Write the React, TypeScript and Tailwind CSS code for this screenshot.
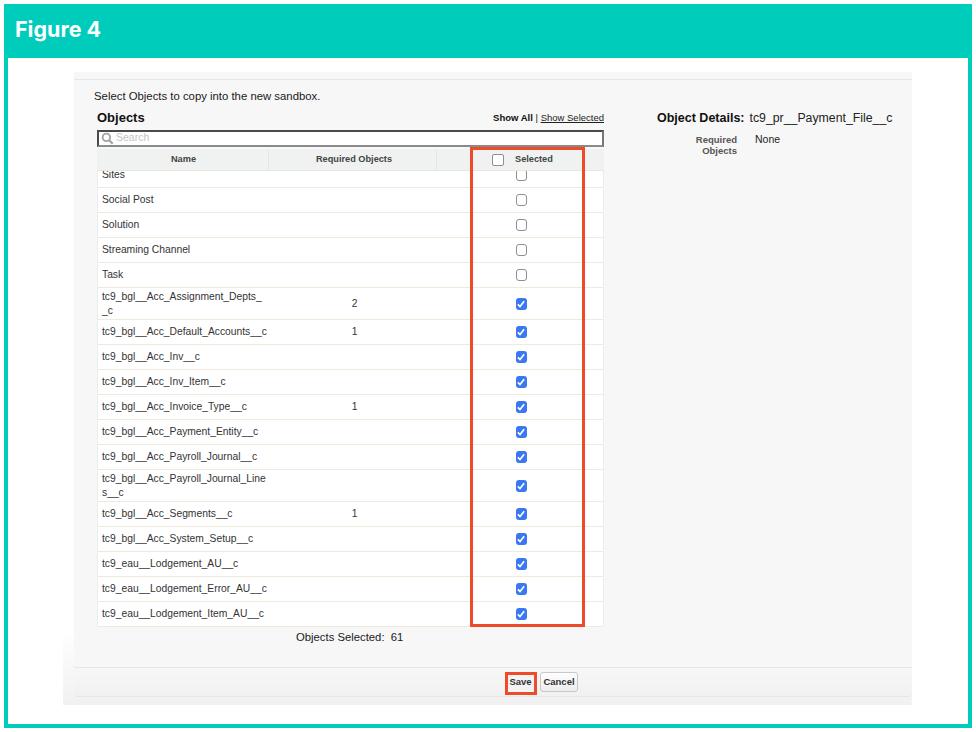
import React from "react";

type Row = { name: React.ReactNode; req?: string; on?: boolean; tall?: boolean };

const rows: Row[] = [
  { name: "Sites" },
  { name: "Social Post" },
  { name: "Solution" },
  { name: "Streaming Channel" },
  { name: "Task" },
  { name: <>tc9_bgl__Acc_Assignment_Depts_<br />_c</>, req: "2", on: true, tall: true },
  { name: "tc9_bgl__Acc_Default_Accounts__c", req: "1", on: true },
  { name: "tc9_bgl__Acc_Inv__c", on: true },
  { name: "tc9_bgl__Acc_Inv_Item__c", on: true },
  { name: "tc9_bgl__Acc_Invoice_Type__c", req: "1", on: true },
  { name: "tc9_bgl__Acc_Payment_Entity__c", on: true },
  { name: "tc9_bgl__Acc_Payroll_Journal__c", on: true },
  { name: <>tc9_bgl__Acc_Payroll_Journal_Line<br />s__c</>, on: true, tall: true },
  { name: "tc9_bgl__Acc_Segments__c", req: "1", on: true },
  { name: "tc9_bgl__Acc_System_Setup__c", on: true },
  { name: "tc9_eau__Lodgement_AU__c", on: true },
  { name: "tc9_eau__Lodgement_Error_AU__c", on: true },
  { name: "tc9_eau__Lodgement_Item_AU__c", on: true },
];

function Check({ on }: { on?: boolean }) {
  if (on) {
    return (
      <div className="flex h-[12px] w-[11px] items-center justify-center rounded-[3px] bg-[#3a78f2]">
        <svg viewBox="0 0 12 12" className="h-[10px] w-[10px]">
          <path d="M2.2 6.4 L4.8 9 L9.8 2.8" fill="none" stroke="#fff" strokeWidth="2" />
        </svg>
      </div>
    );
  }
  return <div className="h-[12px] w-[11px] rounded-[3px] border border-[#8f8f8f] bg-white" />;
}

export default function App() {
  return (
    <div className="h-[732px] w-[976px] bg-white p-1 font-['Liberation_Sans',Arial,sans-serif] text-[#222]">
      <div className="flex h-[724px] w-[968px] flex-col border-x-4 border-b-4 border-[#00ccbb]">
        <div className="-mx-1 flex h-[54px] shrink-0 items-center bg-[#00ccbb] pb-[3px] pl-[11px] font-['Inter',sans-serif] text-[21.5px] font-bold text-white">
          Figure 4
        </div>
        <div className="relative mt-[14px] ml-[55px] flex h-[633px] w-[849px] flex-col bg-gradient-to-b from-white from-[88%] to-[#f1f1f1]">
          <div className="ml-[11px] flex h-[625px] flex-col rounded-b-[4px] bg-[#f7f7f7]">
            <div className="h-[8px] shrink-0 border-b border-[#e6e6e6]" />
            <div className="relative h-[587px] shrink-0">
              <div className="pt-[9px] pl-[20px] text-[11.35px] leading-[14px] text-[#1a1a1a]">
                Select Objects to copy into the new sandbox.
              </div>
              <div className="mt-[5px] flex pl-[23px]">
                <div className="w-[507px] shrink-0">
                  <div className="mb-[2px] flex h-[20px] items-center justify-between">
                    <span className="text-[13px] font-bold text-[#111]">Objects</span>
                    <span className="text-[9.5px] text-[#222]">
                      <b className="text-[#111]">Show All</b> | <span className="underline">Show Selected</span>
                    </span>
                  </div>
                  <div className="flex h-[17px] items-center gap-[2px] border-2 border-[#4a4a4a] border-r-[#777] border-b-[#8a8a8a] bg-white pl-[2px] text-[10.5px] leading-[11px] text-[#c4c4c4]">
                    <svg viewBox="0 0 14 14" className="h-[13px] w-[13px]">
                      <circle cx="5.8" cy="5.8" r="4" fill="none" stroke="#a3a3a3" strokeWidth="2" />
                      <path d="M8.8 8.8 L12.6 12.6" stroke="#a3a3a3" strokeWidth="2.4" />
                    </svg>
                    <span className="-mt-[2px]">Search</span>
                  </div>
                  <div className="mt-[2px] flex h-[22px] items-center border-b border-[#e9e8dc] bg-[#f0f2f1] text-[9.2px] font-bold text-[#444]">
                    <div className="flex h-full w-[172px] items-center justify-center border-r border-[#e4e6e5] pl-[2px]">Name</div>
                    <div className="flex h-full w-[168px] items-center justify-center border-r border-[#e4e6e5] pl-[3px]">Required Objects</div>
                    <div className="relative flex h-full flex-1 items-center">
                      <div className="ml-[55px] h-[12px] w-[12px] rounded-[2px] border border-[#8f8f8f] bg-white" />
                      <span className="ml-[11px]">Selected</span>
                    </div>
                  </div>
                  <div className="h-[456px] overflow-hidden border-x border-[#ececec] bg-white">
                    <div className="-mt-[8px]">
                      {rows.map((r, i) => (
                        <div
                          key={i}
                          className={`flex items-center border-b border-[#eeebdd] text-[10.3px] leading-[14px] text-[#333] ${r.tall ? "h-[32px]" : "h-[25px]"}`}
                        >
                          <div className="w-[171px] shrink-0 pl-[4px] whitespace-nowrap">{r.name}</div>
                          <div className="w-[168px] shrink-0 pl-[3px] text-center">{r.req}</div>
                          <div className="flex flex-1 justify-center pl-[2px]">
                            <Check on={r.on} />
                          </div>
                        </div>
                      ))}
                    </div>
                  </div>
                  <div className="mt-[3px] pl-[199px] text-[11.3px] leading-[14px] text-[#1a1a1a]">
                    Objects Selected:&nbsp; 61
                  </div>
                </div>
                <div className="ml-[53px]">
                  <div className="flex h-[20px] items-center text-[12.3px] text-[#222]">
                    <b className="mr-[5px] text-[12.5px] text-[#111]">Object Details:</b>tc9_pr__Payment_File__c
                  </div>
                  <div className="mt-[6px] flex text-[10.5px] leading-[11px]">
                    <div className="w-[80px] text-right text-[9.5px] font-bold text-[#555]">
                      Required
                      <br />
                      Objects
                    </div>
                    <div className="ml-[18px] text-[#222]">None</div>
                  </div>
                </div>
              </div>
            </div>
            <div className="flex h-[30px] shrink-0 items-center rounded-b-[4px] border-y border-[#e6e6e6] bg-gradient-to-b from-[#f7f7f7] to-[#f1f1f1] pl-[433px] text-[9.5px] font-bold text-[#333]">
              <div className="flex h-[20px] w-[27px] items-center justify-center rounded-[3px] bg-[#f3f3f3]">Save</div>
              <div className="ml-[6px] flex h-[20px] w-[38px] items-center justify-center rounded-[3px] border border-[#c8c8c8] bg-gradient-to-b from-white to-[#ececec]">
                Cancel
              </div>
            </div>
          </div>
          <div className="pointer-events-none absolute top-[75px] left-[407px] h-[480px] w-[115px] border-[3px] border-[#ee4b2b]" />
          <div className="pointer-events-none absolute top-[600px] left-[442px] h-[23px] w-[32px] border-[3px] border-[#ee4b2b]" />
        </div>
      </div>
    </div>
  );
}
